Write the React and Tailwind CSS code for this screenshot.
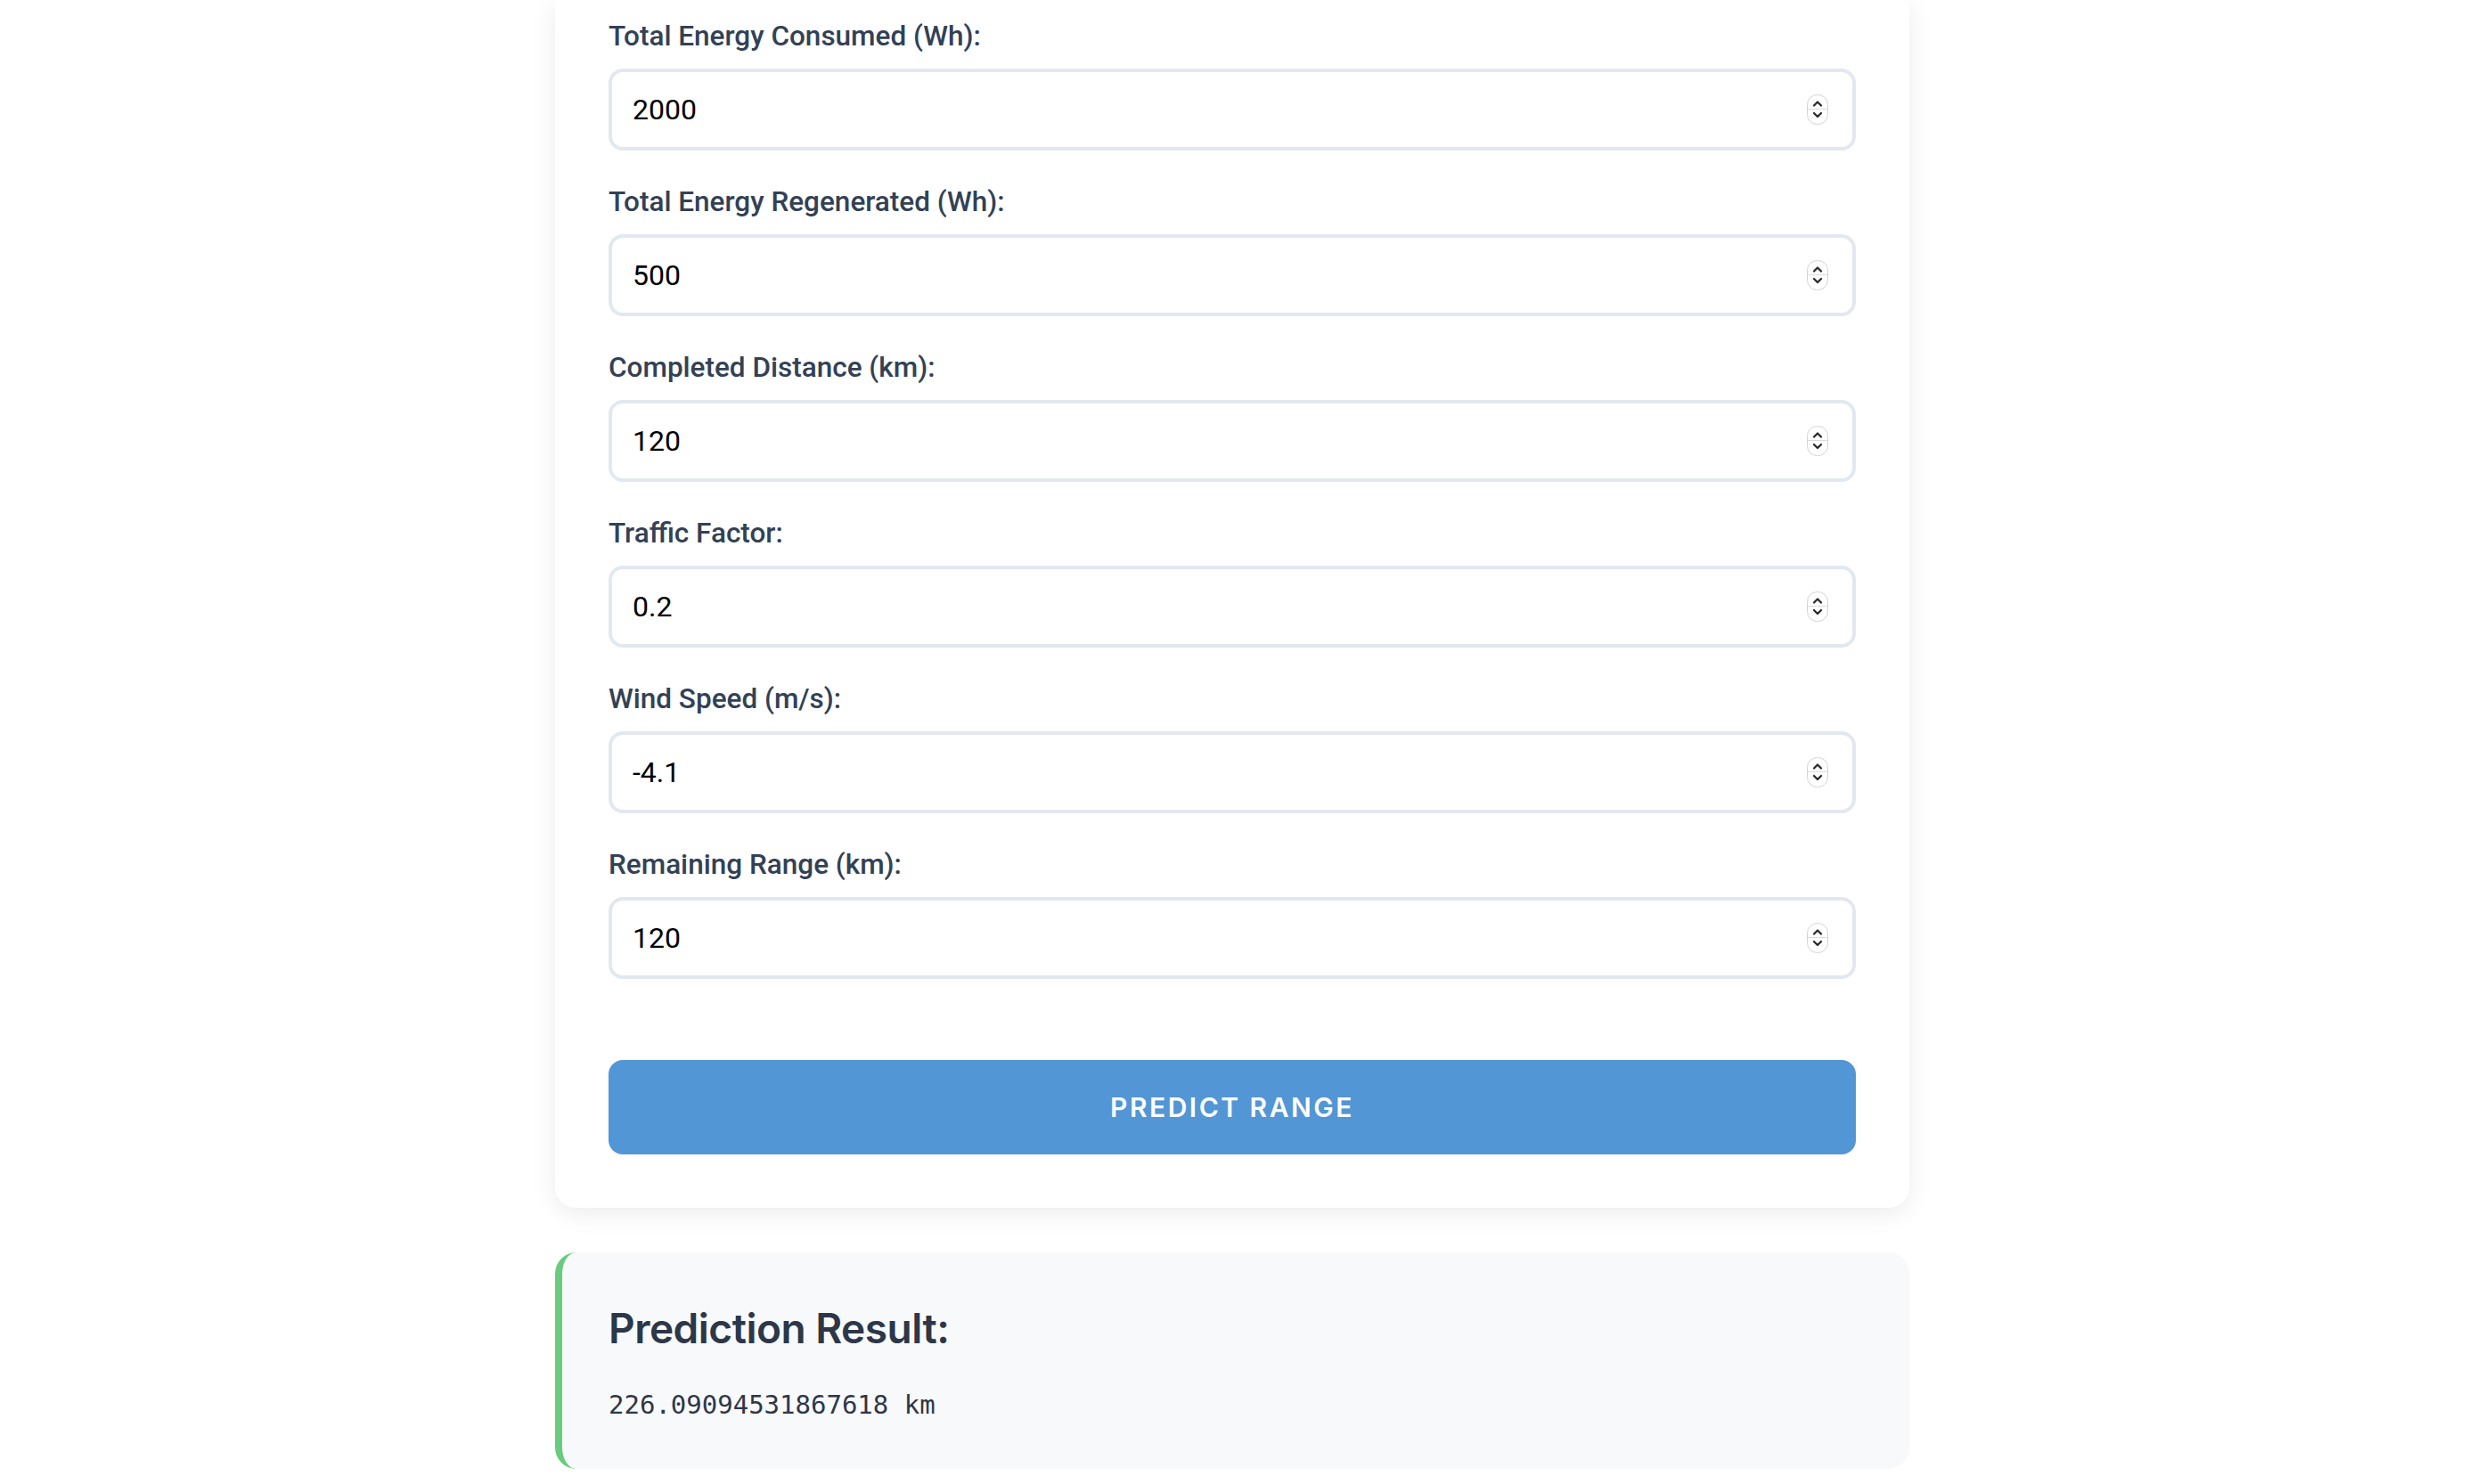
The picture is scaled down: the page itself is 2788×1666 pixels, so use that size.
import { useState } from 'react';

const FIELDS = [
  { id: 'consumed', label: 'Total Energy Consumed (Wh):', value: '2000' },
  { id: 'regenerated', label: 'Total Energy Regenerated (Wh):', value: '500' },
  { id: 'distance', label: 'Completed Distance (km):', value: '120' },
  { id: 'traffic', label: 'Traffic Factor:', value: '0.2' },
  { id: 'wind', label: 'Wind Speed (m/s):', value: '-4.1' },
  { id: 'remaining', label: 'Remaining Range (km):', value: '120' },
];

// little macOS-style spin control drawn next to each number field
function Stepper() {
  return (
    <svg width="24" height="34" viewBox="0 0 24 34" className="shrink-0">
      <rect x="0.5" y="0.5" width="23" height="33" rx="11" fill="#fff" stroke="#d2d2d2" />
      <line x1="1" y1="16.5" x2="23" y2="16.5" stroke="#dcdcdc" />
      <path d="M8 12.5 L12 8.5 L16 12.5" fill="none" stroke="#2b2b2b" strokeWidth="2.3" strokeLinecap="round" strokeLinejoin="round" />
      <path d="M8 21 L12 25 L16 21" fill="none" stroke="#2b2b2b" strokeWidth="2.3" strokeLinecap="round" strokeLinejoin="round" />
    </svg>
  );
}

export default function App() {
  const [values, setValues] = useState(() =>
    Object.fromEntries(FIELDS.map((f) => [f.id, f.value]))
  );

  return (
    <div className="min-h-screen bg-white font-['Roboto',sans-serif]">
      <div className="ml-[623px] w-[1520px] pb-[17px]">
        {/* FORM CARD */}
        <div className="rounded-b-[24px] bg-white px-[60px] pt-[19px] pb-[60px] shadow-[0_6px_28px_rgba(0,0,0,0.08)]">
          {FIELDS.map((f) => (
            <div key={f.id} className="mb-[36px]">
              <label
                htmlFor={f.id}
                className="mb-[14px] block text-[31.5px] leading-[44px] font-medium text-[#334155]"
              >
                {f.label}
              </label>
              <div className="flex h-[92px] items-center rounded-[16px] border-[4px] border-[#e2e8f0] bg-white pr-[27px] pl-[23px]">
                <input
                  id={f.id}
                  type="text"
                  inputMode="decimal"
                  value={values[f.id]}
                  onChange={(e) => setValues({ ...values, [f.id]: e.target.value })}
                  className="min-w-0 flex-1 bg-transparent text-[32px] text-black outline-none"
                />
                <Stepper />
              </div>
            </div>
          ))}

          {/* margins collapse with the last field's mb, so this is the full gap */}
          <button className="mt-[91px] flex h-[106px] w-full items-center justify-center rounded-[16px] bg-[#5296d5] font-['Inter',sans-serif] text-[30px] font-semibold tracking-[2.5px] text-white">
            PREDICT RANGE
          </button>
        </div>

        {/* RESULT */}
        <div className="mt-[50px] h-[243px] rounded-[24px] border-l-[8px] border-[#68cb7e] bg-[#f7f9fb] pt-[57px] pl-[52px]">
          <h3 className="font-['Inter',sans-serif] text-[46px] leading-[56px] font-semibold tracking-[-0.5px] text-[#2d3748]">
            Prediction Result:
          </h3>
          <p className="mt-[38px] font-['DejaVu_Sans_Mono',monospace] text-[29px] leading-[40px] text-[#2d3748]">
            226.09094531867618 km
          </p>
        </div>
      </div>
    </div>
  );
}
